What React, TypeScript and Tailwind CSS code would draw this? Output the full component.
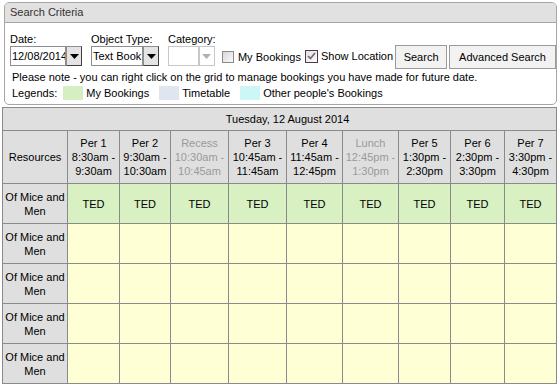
import React from "react";

const font = { fontFamily: '"Liberation Sans", Arial, sans-serif' };

function Arrow({ disabled }: { disabled?: boolean }) {
  return (
    <svg width="9" height="5" viewBox="0 0 9 5">
      <path d="M0 0H9L4.5 5Z" fill={disabled ? "#b0b0b0" : "#000"} />
    </svg>
  );
}

function Combo({ text, w, disabled }: { text: string; w: number; disabled?: boolean }) {
  return (
    <div className="flex h-[20px]">
      <div
        className={`h-full border ${disabled ? "border-[#c8c8c8]" : "border-[#8e8e8e]"} bg-white pl-[1px] leading-[18px] text-[11px] text-black whitespace-nowrap overflow-hidden`}
        style={{ width: w }}
      >
        {text}
      </div>
      <div
        className={`h-full w-[16px] flex items-center justify-center border ${
          disabled ? "border-[#c8c8c8] bg-white" : "border-[#8e8e8e] border-r-[#404040] border-b-[#404040] bg-[#e4e4e4]"
        }`}
      >
        <Arrow disabled={disabled} />
      </div>
    </div>
  );
}

const periods = [
  { w: 51, l: ["Per 1", "8:30am -", "9:30am"] },
  { w: 50, l: ["Per 2", "9:30am -", "10:30am"] },
  { w: 57, l: ["Recess", "10:30am -", "10:45am"], g: true },
  { w: 57, l: ["Per 3", "10:45am -", "11:45am"] },
  { w: 55, l: ["Per 4", "11:45am -", "12:45pm"] },
  { w: 55, l: ["Lunch", "12:45pm -", "1:30pm"], g: true },
  { w: 51, l: ["Per 5", "1:30pm -", "2:30pm"] },
  { w: 53, l: ["Per 6", "2:30pm -", "3:30pm"] },
  { w: 51, l: ["Per 7", "3:30pm -", "4:30pm"] },
];

export default function App() {
  return (
    <div className="w-[558px] h-[384px] bg-white overflow-hidden pt-[2px] text-[11px] text-black" style={font}>
      {/* Search criteria panel */}
      <div className="ml-[4px] w-[553px] h-[103px] border border-[#a6a6a6] rounded-[5px] overflow-hidden bg-white">
        <div className="h-[20px] bg-[#e1e1e1] border-b border-[#a6a6a6] pl-[5px] leading-[19px] text-[#333]">
          Search Criteria
        </div>
        <div className="pt-[9px] pl-[5px]">
          <div className="flex items-start h-[38px] leading-[14px]">
            <div className="w-[72px]">
              <div>Date:</div>
              <Combo text="12/08/2014" w={57} />
            </div>
            <div className="w-[70px] ml-[9px]">
              <div>Object Type:</div>
              <Combo text="Text Book" w={52} />
            </div>
            <div className="w-[47px] ml-[7px]">
              <div>Category:</div>
              <Combo text="" w={31} disabled />
            </div>
            <div className="flex items-center mt-[18px] ml-[7px] whitespace-nowrap">
              <div className="w-[12px] h-[12px] border border-[#8a8a8a] bg-gradient-to-br from-[#d8d8d8] to-[#fafafa]" />
              <span className="ml-[4px]">My Bookings</span>
            </div>
            <div className="flex items-center mt-[17px] ml-[4px] whitespace-nowrap">
              <div className="w-[13px] h-[13px] border border-[#4e3a4e] bg-gradient-to-br from-[#e2e2e2] to-[#fafafa] flex items-center justify-center">
                <svg width="9" height="8" viewBox="0 0 9 8">
                  <path d="M1 4L3.5 6.5L8 1" fill="none" stroke="#6a6a6a" strokeWidth="1.6" />
                </svg>
              </div>
              <span className="ml-[3px]">Show Location</span>
            </div>
            <div className="mt-[13px] ml-[2px] w-[52px] h-[24px] border border-[#9a9a9a] bg-[#f2f2f2] flex items-center justify-center">
              Search
            </div>
            <div className="mt-[13px] ml-[2px] w-[107px] h-[24px] border border-[#9a9a9a] bg-[#f2f2f2] flex items-center justify-center whitespace-nowrap">
              Advanced Search
            </div>
          </div>
          <div className="h-[16px] leading-[14px] pl-[2px] whitespace-nowrap">
            Please note - you can right click on the grid to manage bookings you have made for future date.
          </div>
          <div className="h-[14px] leading-[14px] pl-[2px] flex items-center whitespace-nowrap">
            <span>Legends:</span>
            <span className="ml-[6px] w-[20px] h-[14px] bg-[#d6efc2]" />
            <span className="ml-[3px]">My Bookings</span>
            <span className="ml-[10px] w-[20px] h-[14px] bg-[#dfe6f0]" />
            <span className="ml-[3px]">Timetable</span>
            <span className="ml-[10px] w-[20px] h-[14px] bg-[#cdf6f6]" />
            <span className="ml-[3px]">Other people's Bookings</span>
          </div>
        </div>
      </div>

      {/* Grid */}
      <div
        className="mt-[2px] ml-[2px] inline-grid bg-[#8a8a8a] p-px gap-px leading-[14px]"
        style={{
          gridTemplateColumns: `64px ${periods.map((p) => p.w + "px").join(" ")}`,
          gridTemplateRows: "22px 52px repeat(5, 39px)",
        }}
      >
        <div className="col-span-10 bg-[#dfdfdf] flex items-center justify-center pl-[16px]">
          Tuesday, 12 August 2014
        </div>
        <div className="bg-[#dfdfdf] flex items-center justify-center">Resources</div>
        {periods.map((p, i) => (
          <div
            key={i}
            className={`bg-[#dfdfdf] flex flex-col items-center justify-center whitespace-nowrap ${
              p.g ? "text-[#9a9a9a]" : "text-black"
            }`}
          >
            {p.l.map((t, j) => (
              <div key={j}>{t}</div>
            ))}
          </div>
        ))}
        {[0, 1, 2, 3, 4].map((r) => (
          <React.Fragment key={r}>
            <div className="bg-[#dfdfdf] flex flex-col items-center justify-center text-center">
              <div className="whitespace-nowrap">Of Mice and</div>
              <div>Men</div>
            </div>
            {periods.map((_, i) => (
              <div
                key={i}
                className={`${r === 0 ? "bg-[#d8f0c2]" : "bg-[#ffffd6]"} flex items-center justify-center`}
              >
                {r === 0 ? "TED" : ""}
              </div>
            ))}
          </React.Fragment>
        ))}
      </div>
    </div>
  );
}
